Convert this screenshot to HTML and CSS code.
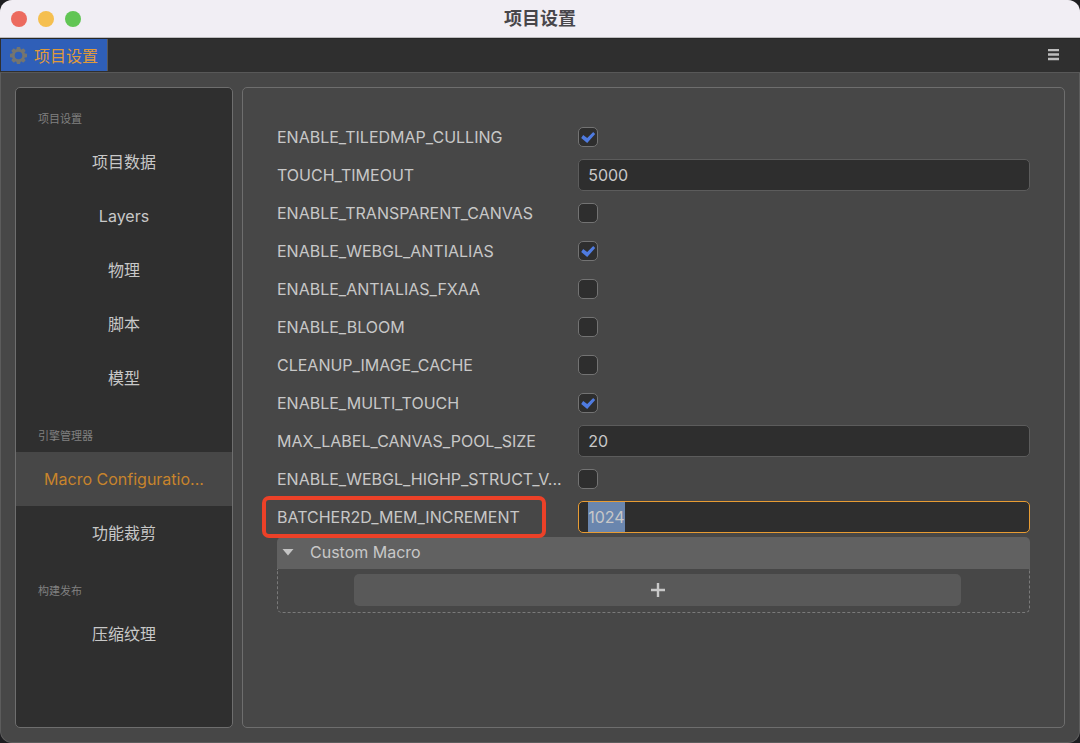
FILE: index.html
```
<!DOCTYPE html>
<html lang="zh-CN">
<head>
  <meta charset="UTF-8">
  <meta name="viewport" content="width=device-width, initial-scale=1.0">
  <title>项目设置</title>
  <link rel="stylesheet" href="styles.css">
</head>
<body>
  <div class="window">
    <header class="titlebar">
      <div class="lights">
        <button class="light light-close" type="button" aria-label="关闭"></button>
        <button class="light light-min" type="button" aria-label="最小化"></button>
        <button class="light light-max" type="button" aria-label="缩放"></button>
      </div>
      <h1 class="title">项目设置</h1>
    </header>

    <div class="tabs">
      <button class="tab" type="button">
        <svg class="gear" viewBox="0 0 20 20" aria-hidden="true">
          <g fill="#75756f">
            <rect x="8" y="1" width="4" height="18" rx="1"/>
            <rect x="8" y="1" width="4" height="18" rx="1" transform="rotate(45 10 10)"/>
            <rect x="8" y="1" width="4" height="18" rx="1" transform="rotate(90 10 10)"/>
            <rect x="8" y="1" width="4" height="18" rx="1" transform="rotate(135 10 10)"/>
            <circle cx="10" cy="10" r="7"/>
          </g>
          <circle cx="10" cy="10" r="4" fill="#2f5fb8"/>
        </svg>
        <span>项目设置</span>
      </button>
      <button class="menu" type="button" aria-label="菜单">
        <svg viewBox="0 0 12 12" aria-hidden="true"><path d="M0 1h11M0 5.5h11M0 10h11" stroke="#bdbdbd" stroke-width="2.4"/></svg>
      </button>
    </div>

    <main class="content">
      <nav class="sidebar">
        <h2 class="group">项目设置</h2>
        <a class="item" href="#data">项目数据</a>
        <a class="item" href="#layers">Layers</a>
        <a class="item" href="#physics">物理</a>
        <a class="item" href="#script">脚本</a>
        <a class="item" href="#model">模型</a>
        <h2 class="group">引擎管理器</h2>
        <a class="item active" href="#macro">Macro Configuratio...</a>
        <a class="item" href="#feature">功能裁剪</a>
        <h2 class="group">构建发布</h2>
        <a class="item" href="#texture">压缩纹理</a>
      </nav>

      <section class="panel">
        <div class="row">
          <label for="tiledmap">ENABLE_TILEDMAP_CULLING</label>
          <input type="checkbox" id="tiledmap" checked>
        </div>
        <div class="row">
          <label for="touch">TOUCH_TIMEOUT</label>
          <input type="text" id="touch" value="5000">
        </div>
        <div class="row">
          <label for="transparent">ENABLE_TRANSPARENT_CANVAS</label>
          <input type="checkbox" id="transparent">
        </div>
        <div class="row">
          <label for="antialias">ENABLE_WEBGL_ANTIALIAS</label>
          <input type="checkbox" id="antialias" checked>
        </div>
        <div class="row">
          <label for="fxaa">ENABLE_ANTIALIAS_FXAA</label>
          <input type="checkbox" id="fxaa">
        </div>
        <div class="row">
          <label for="bloom">ENABLE_BLOOM</label>
          <input type="checkbox" id="bloom">
        </div>
        <div class="row">
          <label for="cleanup">CLEANUP_IMAGE_CACHE</label>
          <input type="checkbox" id="cleanup">
        </div>
        <div class="row">
          <label for="multitouch">ENABLE_MULTI_TOUCH</label>
          <input type="checkbox" id="multitouch" checked>
        </div>
        <div class="row">
          <label for="pool">MAX_LABEL_CANVAS_POOL_SIZE</label>
          <input type="text" id="pool" value="20">
        </div>
        <div class="row">
          <label for="highp">ENABLE_WEBGL_HIGHP_STRUCT_V...</label>
          <input type="checkbox" id="highp">
        </div>
        <div class="row">
          <label class="marked" for="batcher">BATCHER2D_MEM_INCREMENT</label>
          <input type="text" id="batcher" value="1024">
        </div>

        <div class="section">
          <button class="section-head" type="button">
            <svg class="arrow" viewBox="0 0 12 8" aria-hidden="true"><path d="M0.5 1h11L6 7.5z" fill="#c4c4c4"/></svg>
            <span>Custom Macro</span>
          </button>
          <div class="section-body">
            <button class="add" type="button" aria-label="添加">
              <svg viewBox="0 0 16 16" aria-hidden="true"><path d="M8 1v14M1 8h14" stroke="#c8c8c8" stroke-width="2.4"/></svg>
            </button>
          </div>
        </div>
      </section>
    </main>
  </div>

  <script>
    const batcher = document.getElementById('batcher');
    batcher.focus();
    batcher.select();
  </script>
</body>
</html>
```
FILE: styles.css
```
* {
  box-sizing: border-box;
}
body {
  margin: 0;
  background: #1d1d20;
  color: #c8c8c8;
  font-family: Inter, "Noto Sans CJK SC", sans-serif;
  font-size: 16px;
}
button, input {
  font: inherit;
  color: inherit;
  margin: 0;
}
button {
  border: none;
  padding: 0;
}
.window {
  display: flex;
  flex-direction: column;
  min-height: 100vh;
  background: #474747;
  border-radius: 12px;
  overflow: hidden;
}

/* title bar */
.titlebar {
  display: grid;
  grid-template-columns: 1fr auto 1fr;
  align-items: center;
  height: 38px;
  padding: 0 11px;
  background: #f1eef4;
  border-bottom: 1px solid #bdbcbe;
}
.lights {
  display: flex;
  gap: 11px;
}
.light {
  width: 16px;
  height: 16px;
  border-radius: 50%;
}
.light-close {
  background: #ec6a5e;
}
.light-min {
  background: #f5bf4f;
}
.light-max {
  background: #61c554;
}
.title {
  margin: 0;
  color: #48464a;
  font-size: 18px;
  font-weight: 700;
  line-height: 22px;
}

/* tabs */
.tabs {
  display: flex;
  justify-content: space-between;
  height: 35px;
  padding: 0 1px 1px;
  background: #2f2f2f;
  border-top: 1px solid #262626;
  border-bottom: 1px solid #585858;
}
.tab {
  display: flex;
  align-items: center;
  gap: 6px;
  padding: 0 9px 0 8px;
  background: #2f5fb8;
  border-right: 1px solid #585858;
  color: #e09a3a;
}
.gear {
  width: 19px;
  height: 19px;
}
.menu {
  width: 50px;
  background: none;
}
.menu svg {
  width: 12px;
  height: 12px;
}

.content {
  flex: 1;
  display: flex;
  gap: 9px;
  padding: 14px;
  border: solid #5c5c5c;
  border-width: 0 1px 1px;
  border-radius: 0 0 12px 12px;
}

/* sidebar */
.sidebar {
  flex: none;
  width: 218px;
  background: #2f2f2f;
  border: 1px solid #6e6e6e;
  border-radius: 5px;
}
.group {
  margin: 0;
  padding: 23px 22px 8px;
  color: #808080;
  font-size: 11px;
  font-weight: 400;
  line-height: 16px;
}
.item {
  display: block;
  color: #c8c8c8;
  line-height: 54px;
  text-align: center;
  text-decoration: none;
}
.item.active {
  background: #474747;
  color: #c8842c;
}

/* settings */
.panel {
  flex: 1;
  padding: 33px 34px;
  border: 1px solid #6e6e6e;
  border-radius: 5px;
}
.row {
  display: grid;
  grid-template-columns: 40% 60%;
  align-items: center;
  height: 32px;
  margin-bottom: 6px;
}
.row label {
  justify-self: start;
  white-space: nowrap;
}
.row input {
  background: #2e2e2e;
  border: 1px solid #5c5c5c;
  border-radius: 5px;
}
.row input[type="text"] {
  width: 100%;
  height: 32px;
  padding: 0 9px;
}
.row input[type="text"]:focus {
  background: linear-gradient(#6a86ae, #6a86ae) 9px 0 / 37px 100% no-repeat #2e2e2e;
  border-color: #e89c33;
  outline: none;
}
.row input::selection {
  background: #6a86ae;
  color: #c8c8c8;
}
.row input[type="checkbox"] {
  appearance: none;
  width: 20px;
  height: 20px;
  border-color: #737373;
}
.row input[type="checkbox"]:checked::before {
  content: "";
  display: block;
  height: 18px;
  background: #4f7be0;
  clip-path: polygon(2px 10px, 4px 7px, 8px 10px, 14px 4px, 16px 6px, 8px 15px);
}
.marked {
  position: relative;
}
.marked::after {
  content: "";
  position: absolute;
  inset: -11px -26px -11px -15px;
  border: 4px solid #ec4128;
  border-radius: 7px;
}

/* foldable section */
.section {
  margin-top: -2px;
}
.section-head {
  display: flex;
  align-items: center;
  gap: 16px;
  width: 100%;
  height: 32px;
  padding: 0 5px 2px;
  background: #616161;
  border-radius: 5px 5px 0 0;
}
.arrow {
  width: 12px;
  height: 8px;
}
.section-body {
  padding: 5px 68px 6px 76px;
  border: 1px dashed #7a7a7a;
  border-top: none;
  border-radius: 0 0 5px 5px;
}
.add {
  display: flex;
  align-items: center;
  justify-content: center;
  width: 100%;
  height: 32px;
  background: #595959;
  border-radius: 5px;
}
.add svg {
  width: 16px;
  height: 16px;
}
```
